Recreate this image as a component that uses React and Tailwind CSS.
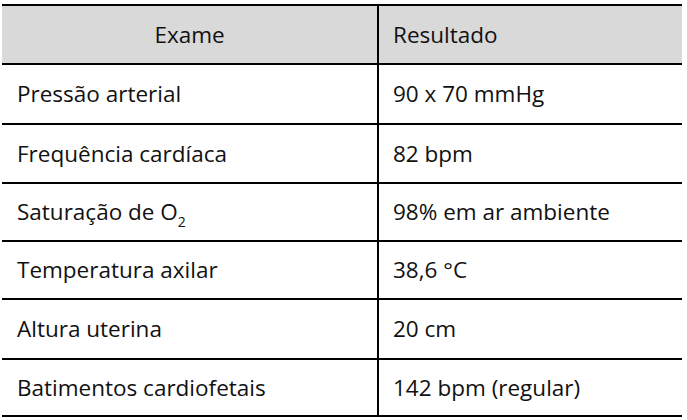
export default function App() {
  const rows = [
    { exame: 'Pressão arterial', resultado: '90 x 70 mmHg', h: 'h-[60px]' },
    { exame: 'Frequência cardíaca', resultado: '82 bpm', h: 'h-[59px]' },
    {
      exame: (
        <>
          Saturação de O<sub className="text-[14px] align-[-3px] leading-none">2</sub>
        </>
      ),
      resultado: '98% em ar ambiente',
      h: 'h-[58px]',
    },
    { exame: 'Temperatura axilar', resultado: '38,6 °C', h: 'h-[58px]' },
    { exame: 'Altura uterina', resultado: '20 cm', h: 'h-[60px]' },
    { exame: 'Batimentos cardiofetais', resultado: '142 bpm (regular)', h: 'h-[57px]' },
  ];

  return (
    <div className="w-[687px] h-[420px] bg-white pt-[4px] pl-[2px] font-['Open_Sans','Liberation_Sans',sans-serif] text-[22.5px] text-[#111]">
      <div className="w-[680px] border-t-2 border-black">
        {/* header */}
        <div className="grid grid-cols-[377px_1fr] h-[59px] bg-[#d9d9d9] border-b-2 border-black">
          <div className="flex items-center justify-center border-r-2 border-black">Exame</div>
          <div className="flex items-center pl-[14px]">Resultado</div>
        </div>
        {rows.map((r, i) => (
          <div key={i} className={`grid grid-cols-[377px_1fr] border-b-2 border-black ${r.h}`}>
            <div className="flex items-center pl-[15px] border-r-2 border-black">
              <span>{r.exame}</span>
            </div>
            <div className="flex items-center pl-[14px]">{r.resultado}</div>
          </div>
        ))}
      </div>
    </div>
  );
}
